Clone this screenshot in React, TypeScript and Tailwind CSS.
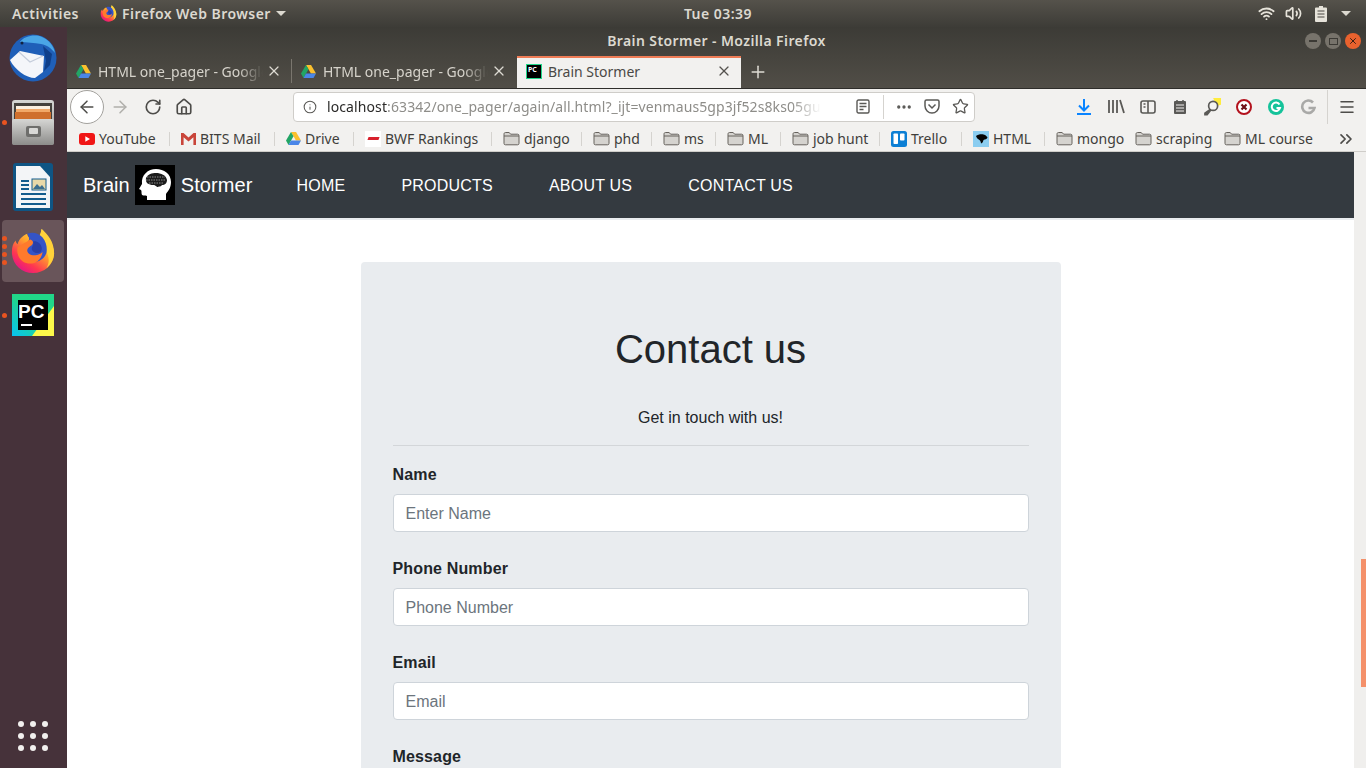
import { ArrowLeft, ArrowRight, ChevronsRight, Ellipsis, House, Info, Menu, Plus, RotateCw, Star, Volume2, Wifi, X } from 'lucide-react';

const uiFont = 'font-["Noto_Sans",sans-serif]';

function FirefoxLogo({ size, id }: { size: number; id: string }) {
  return (
    <svg width={size} height={size} viewBox="0 0 48 48">
      <defs>
        <linearGradient id={`${id}a`} x1="0.8" y1="0.1" x2="0.2" y2="0.95">
          <stop offset="0" stopColor="#ffe847" />
          <stop offset="0.4" stopColor="#ffa22c" />
          <stop offset="0.75" stopColor="#ff3750" />
          <stop offset="1" stopColor="#e31587" />
        </linearGradient>
      </defs>
      <path d="M33 1c5 4 2 7 4 10 6 5 9 10 9 15 0 12-10 21-22 21S2 38 2 25c0-5 1-9 4-12 0 2 1 3 2 4 1-5 5-9 10-11 0 3 3 5 5 6 4 1 9-3 10-11z" fill={`url(#${id}a)`} />
      <path d="M33 1c6 5 13 13 13 25 0 6-3 12-8 16 3-5 3-10 1-15-2-7-8-10-7-17 0-3 0-6 1-9z" fill="#ffd23a" />
      <path d="M18 6c5-2 12-1 16 4 4 5 5 11 4 16-2 6-8 10-14 9-6-1-10-6-10-11 0-4 1-7 4-9 3-2 2-6 0-9z" fill="#3554c7" />
      <path d="M8 20c4-3 9-5 13-8 4 1 4 5 0 7-3 2-4 5-2 7 3 4 11 3 15-1-1 8-7 13-15 12-8-1-13-9-11-17z" fill="#ff7a2c" />
      <path d="M24 14c4-1 8 2 9 6 1 4-2 7-6 6-3-1-5-3-4-6 1-2 2-4 1-6z" fill="#2a3fa8" />
    </svg>
  );
}

function DriveIcon({ size = 15 }: { size?: number }) {
  return (
    <svg width={size} height={size} viewBox="0 0 16 15" className="shrink-0">
      <path d="M5.3 0.5h5.4L16 9.6h-5.4z" fill="#fbc02d" />
      <path d="M5.3 0.5L0 9.6l2.7 4.8L8 5.2z" fill="#22a565" />
      <path d="M5.3 9.6H16l-2.7 4.8H2.7z" fill="#4a86e8" />
    </svg>
  );
}

function FolderIcon() {
  return (
    <svg width={17} height={15} viewBox="0 0 17 15" className="shrink-0">
      <path d="M1 3.2C1 2 1.6 1.5 2.6 1.5h3.6l1.4 1.7h7c.9 0 1.4.5 1.4 1.4v7.8c0 .9-.5 1.4-1.4 1.4H2.4c-.9 0-1.4-.5-1.4-1.4z" fill="#d5d3cf" stroke="#66625d" strokeWidth="1" />
      <path d="M1 5h15" stroke="#66625d" strokeWidth="1" />
    </svg>
  );
}

function YoutubeIcon() {
  return (
    <svg width={16} height={12} viewBox="0 0 16 12" className="shrink-0">
      <rect width="16" height="12" rx="3" fill="#f01616" />
      <path d="M6.3 3.2L11 6 6.3 8.8z" fill="#fff" />
    </svg>
  );
}

function GmailIcon() {
  return (
    <svg width={15} height={12} viewBox="0 0 15 12" className="shrink-0">
      <path d="M0 0h2.5L7.5 4.5 12.5 0H15v12h-2.6V4.3L7.5 8.6 2.6 4.3V12H0z" fill="#c9453a" />
    </svg>
  );
}

function BwfIcon() {
  return (
    <span className="flex h-4 w-4 shrink-0 items-center justify-center bg-white">
      <span className="h-[3px] w-[11px] skew-x-[-20deg] bg-[#d8202c]" />
    </span>
  );
}

function TrelloIcon() {
  return (
    <svg width={16} height={16} viewBox="0 0 16 16" className="shrink-0">
      <rect width="16" height="16" rx="2.5" fill="#0c7fd4" />
      <rect x="2.5" y="2.5" width="4.5" height="10.5" rx="0.8" fill="#fff" />
      <rect x="9" y="2.5" width="4.5" height="7" rx="0.8" fill="#fff" />
    </svg>
  );
}

function HtmlIcon() {
  return (
    <svg width={16} height={16} viewBox="0 0 16 16" className="shrink-0">
      <rect width="16" height="16" fill="#8bcdf0" />
      <path d="M3 5c2-2 7-2.500 9-1 1 .8 2 1.500 2.500 2.500C14 8 12 8.500 10.500 9c-.3 1.500-1 3-2.500 3.500 0-1-.5-2.500-1.500-3.500C5 8 3.500 7 3 5z" fill="#050505" />
    </svg>
  );
}

const bookmarks = [
  { label: 'YouTube', icon: <YoutubeIcon />, width: 'w-[102px]', sep: true },
  { label: 'BITS Mail', icon: <GmailIcon />, width: 'w-[105px]', sep: true },
  { label: 'Drive', icon: <DriveIcon />, width: 'w-[79px]', sep: true },
  { label: 'BWF Rankings', icon: <BwfIcon />, width: 'w-[138px]', sep: true },
  { label: 'django', icon: <FolderIcon />, width: 'w-[90px]', sep: true },
  { label: 'phd', icon: <FolderIcon />, width: 'w-[70px]', sep: true },
  { label: 'ms', icon: <FolderIcon />, width: 'w-[64px]', sep: true },
  { label: 'ML', icon: <FolderIcon />, width: 'w-[65px]', sep: true },
  { label: 'job hunt', icon: <FolderIcon />, width: 'w-[99px]', sep: true },
  { label: 'Trello', icon: <TrelloIcon />, width: 'w-[82px]', sep: true },
  { label: 'HTML', icon: <HtmlIcon />, width: 'w-[83px]', sep: true },
  { label: 'mongo', icon: <FolderIcon />, width: 'w-[79px]', sep: false },
  { label: 'scraping', icon: <FolderIcon />, width: 'w-[89px]', sep: false },
  { label: 'ML course', icon: <FolderIcon />, width: 'w-[122px]', sep: false },
];

function TopBar() {
  return (
    <div className={`flex h-[27px] shrink-0 items-center bg-gradient-to-b from-[#55524b] to-[#3d3c37] text-[14px] font-semibold tracking-[0.45px] text-[#dcd9d0] ${uiFont}`}>
      <span className="ml-3 w-[88px]">Activities</span>
      <FirefoxLogo size={17} id="top" />
      <span className="ml-[5px]">Firefox Web Browser</span>
      <span className="ml-[5px] h-0 w-0 border-x-[5px] border-t-[5px] border-x-transparent border-t-[#dcd9d0]" />
      <span className="ml-[398px] w-[66px] text-center whitespace-nowrap">Tue 03:39</span>
      <div className="ml-auto flex items-center">
        <Wifi size={17} strokeWidth={2.6} className="text-[#e6e3da]" />
        <Volume2 size={17} strokeWidth={2.4} className="ml-[10px] text-[#e6e3da]" />
        <svg width={12} height={16} viewBox="0 0 12 16" className="ml-[13px]">
          <path d="M4 0h4v1.500h3a1 1 0 0 1 1 1V15a1 1 0 0 1-1 1H1a1 1 0 0 1-1-1V2.500a1 1 0 0 1 1-1h3z" fill="#e6e3da" />
          <path d="M2.500 5h7M2.500 8h7M2.500 11h7" stroke="#4a4842" strokeWidth="1.200" />
        </svg>
        <span className="mr-[15px] ml-[14px] h-0 w-0 border-x-[5px] border-t-[5px] border-x-transparent border-t-[#dcd9d0]" />
      </div>
    </div>
  );
}

function Dock() {
  return (
    <div className="flex w-[67px] shrink-0 flex-col items-start bg-[#46323a] pl-[2px]">
      <div className="relative mt-[7px] flex h-[48px] w-[62px] items-center justify-center">
        <svg width={48} height={48} viewBox="0 0 48 48">
          <circle cx="24" cy="24" r="23.500" fill="#1f5fb8" />
          <path d="M11 8c4-6 15-8 22-5 7 3 12 9 13 16-4-5-8-8-14-9-7-1-14-2-21-2z" fill="#4aa6e6" />
          <path d="M34 12l3 15-2 10 6-6 2-11z" fill="#0f3f8a" />
          <path d="M1 26l10-9 24 5-1 16-8 6c-9 0-20-8-25-18z" fill="#f4f6fa" />
          <path d="M10 18l11 10 13-6" fill="none" stroke="#c5cddb" strokeWidth="1.200" />
          <circle cx="13" cy="9" r="1.500" fill="#12223f" />
        </svg>
      </div>
      <div className="relative mt-[18px] flex h-[45px] w-[62px] items-center justify-center">
        <span className="absolute left-0 top-[20px] h-[5px] w-[5px] rounded-full bg-[#e95420]" />
        <svg width={42} height={45} viewBox="0 0 42 45">
          <defs>
            <linearGradient id="cab" x1="0" y1="0" x2="0" y2="1">
              <stop offset="0" stopColor="#d6d6d4" />
              <stop offset="1" stopColor="#8c8c8a" />
            </linearGradient>
          </defs>
          <rect width="42" height="45" rx="3" fill="url(#cab)" />
          <rect x="2" y="3" width="38" height="16" fill="#45413d" />
          <rect x="4" y="6" width="34" height="3" fill="#fbefe0" />
          <rect x="4" y="9" width="34" height="3" fill="#f1a869" />
          <rect x="3" y="12" width="36" height="7" fill="#cf6f2e" />
          <rect x="0" y="19" width="42" height="26" rx="2" fill="url(#cab)" />
          <rect x="14" y="26" width="15" height="11" rx="2" fill="#6e6e6c" />
          <rect x="17" y="28" width="9" height="6" rx="1" fill="#d8d8d6" />
        </svg>
      </div>
      <div className="mt-[18px] flex h-[48px] w-[62px] items-center justify-center">
        <svg width={40} height={48} viewBox="0 0 40 48">
          <rect width="40" height="48" rx="3" fill="#0f5584" />
          <path d="M3 3h24l10 11v31H3z" fill="#f3f5f7" />
          <path d="M28 2h10v10z" fill="#0f5584" />
          <path d="M8 18h8M8 22h8M8 26h8M8 31h25M8 36h25M8 41h25" stroke="#135c8d" strokeWidth="2" />
          <rect x="19" y="16" width="14" height="11" fill="#e9d9a8" stroke="#135c8d" />
          <path d="M20 26l4-5 3 3 2-2 3 4z" fill="#3c6f8f" />
        </svg>
      </div>
      <div className="relative mt-[9px] flex h-[62px] w-[62px] items-center justify-center rounded-[4px] bg-[#69555a]">
        <div className="absolute left-0 top-[16px] flex flex-col gap-[3px]">
          <span className="h-[5px] w-[5px] rounded-full bg-[#e95420]" />
          <span className="h-[5px] w-[5px] rounded-full bg-[#e95420]" />
          <span className="h-[5px] w-[5px] rounded-full bg-[#e95420]" />
          <span className="h-[5px] w-[5px] rounded-full bg-[#e95420]" />
        </div>
        <FirefoxLogo size={46} id="dock" />
      </div>
      <div className="relative mt-[12px] flex h-[42px] w-[62px] items-center justify-center">
        <span className="absolute left-0 top-[19px] h-[5px] w-[5px] rounded-full bg-[#e95420]" />
        <svg width={42} height={42} viewBox="0 0 42 42">
          <defs>
            <linearGradient id="pc" x1="0" y1="1" x2="1" y2="0">
              <stop offset="0" stopColor="#07c3f2" />
              <stop offset="0.5" stopColor="#21d789" />
              <stop offset="1" stopColor="#21d789" />
            </linearGradient>
          </defs>
          <rect width="42" height="42" fill="url(#pc)" />
          <path d="M42 12v30H20z" fill="#fcf84a" />
          <rect x="6" y="6" width="30" height="30" fill="#000" />
        </svg>
        <span className="absolute left-[16px] top-[7px] font-['Liberation_Sans',sans-serif] text-[19px] leading-[22px] font-bold text-white">PC</span>
        <span className="absolute left-[19px] top-[30px] h-[2px] w-[11px] bg-white" />
      </div>
      <div className="mt-auto mb-[17px] ml-[16px] grid grid-cols-3 gap-x-[6px] gap-y-[6px]">
        {Array.from({ length: 9 }).map((_, i) => (
          <span key={i} className="h-[6px] w-[6px] rounded-full bg-[#f2f0ee]" />
        ))}
      </div>
    </div>
  );
}

function InactiveTab({ withSeparator }: { withSeparator: boolean }) {
  return (
    <div className="flex h-[32px] w-[225px] items-center pb-[2px] pl-[9px]">
      <DriveIcon />
      <span className="ml-[7px] w-[165px] overflow-hidden whitespace-nowrap text-[14px] text-[#d6d3cb] [mask-image:linear-gradient(to_right,black_85%,transparent)]">HTML one_pager - Google</span>
      <X size={16} strokeWidth={1.8} className="ml-[3px] text-[#dedbd3]" />
      {withSeparator && <span className="ml-[9px] h-[24px] w-px bg-[#7a766e]" />}
    </div>
  );
}

function TitleAndTabs() {
  return (
    <div className={`h-[61px] shrink-0 bg-gradient-to-b from-[#3c3b36] to-[#514e47] ${uiFont}`}>
      <div className="relative flex h-[29px] items-center justify-center text-[14px] font-semibold tracking-[0.4px] text-[#dcd9d0]">
        <span className="pb-[2px]">Brain Stormer - Mozilla Firefox</span>
        <div className="absolute right-[5px] top-[6px] flex gap-[4px]">
          <span className="flex h-4 w-4 items-center justify-center rounded-full bg-[#77736b]"><span className="h-[1.5px] w-2 bg-[#3c3a35]" /></span>
          <span className="flex h-4 w-4 items-center justify-center rounded-full bg-[#77736b]"><span className="h-[7px] w-[9px] border border-[#3c3a35]" /></span>
          <span className="flex h-4 w-4 items-center justify-center rounded-full bg-[#e9622e]"><X size={10} strokeWidth={2.4} className="text-[#3c2014]" /></span>
        </div>
      </div>
      <div className="flex items-end pl-0">
        <InactiveTab withSeparator />
        <InactiveTab withSeparator={false} />
        <div className="flex h-[32px] w-[224px] items-center border-t-2 border-[#ef7c56] bg-[#f2f1ef] pb-[4px] pl-[9px]">
          <span className="flex h-[15px] w-[16px] items-start border border-[#21d789] bg-black pl-[1px] text-[7px] leading-[9px] font-bold text-white">PC</span>
          <span className="ml-[6px] w-[168px] text-[14px] whitespace-nowrap text-[#4a4946]">Brain Stormer</span>
          <X size={16} strokeWidth={1.8} className="text-[#55534f]" />
        </div>
        <Plus size={20} strokeWidth={1.8} className="mb-[6px] ml-[7px] text-[#dedbd3]" />
      </div>
    </div>
  );
}

function NavToolbar() {
  return (
    <div className={`flex h-[36px] shrink-0 items-center border-t border-[#2e2d2a] bg-[#f2f1ef] ${uiFont}`}>
      <span className="ml-[3px] flex h-[34px] w-[34px] items-center justify-center rounded-full border border-[#a3a19d] bg-white">
        <ArrowLeft size={20} strokeWidth={1.8} className="text-[#4d4c49]" />
      </span>
      <ArrowRight size={20} strokeWidth={1.8} className="ml-[6px] text-[#b0afab]" />
      <RotateCw size={18} strokeWidth={2.2} className="ml-[14px] text-[#4d4c49]" />
      <House size={18} strokeWidth={2.2} className="ml-[13px] text-[#4d4c49]" />
      <div className="ml-[100px] flex h-[30px] w-[682px] items-center rounded-[4px] border border-[#cfcdc9] bg-white">
        <Info size={14} strokeWidth={1.8} className="ml-[9px] text-[#5a5956]" />
        <span className="ml-[10px] w-[494px] overflow-hidden text-[14px] tracking-[0.1px] whitespace-nowrap text-[#8e8d89] [mask-image:linear-gradient(to_right,black_94%,transparent)]">
          <span className="text-[#2b2a29]">localhost</span>:63342/one_pager/again/all.html?_ijt=venmaus5gp3jf52s8ks05gu
        </span>
        <svg width={14} height={15} viewBox="0 0 14 15" fill="none" stroke="#5a5956" strokeWidth="1.400" className="ml-[35px]">
          <rect x="1" y="1" width="12" height="13" rx="1.500" />
          <path d="M3.500 4.500h7M3.500 7.500h7M3.500 10.500h4" />
        </svg>
        <span className="ml-[13px] h-[24px] w-px bg-[#d5d3cf]" />
        <Ellipsis size={18} strokeWidth={2.4} className="ml-[11px] text-[#5a5956]" />
        <svg width={16} height={15} viewBox="0 0 16 15" fill="none" stroke="#5a5956" strokeWidth="1.500" className="ml-[11px]">
          <path d="M1 2.500C1 1.500 1.700 1 2.500 1h11c.8 0 1.500.5 1.500 1.500V7c0 3.800-3.300 7-7 7S1 10.800 1 7z" />
          <path d="M4.500 5.500L8 9l3.500-3.500" />
        </svg>
        <Star size={17} strokeWidth={1.8} className="ml-[12px] text-[#5a5956]" />
      </div>
      <div className="ml-[102px] flex h-[36px] items-center">
        <svg width={14} height={16} viewBox="0 0 14 16" fill="none" stroke="#0a84ff" strokeWidth="2">
          <path d="M7 0v11M2 6.500L7 11.500l5-5M0 15h14" />
        </svg>
        <svg width={17} height={15} viewBox="0 0 17 15" fill="none" stroke="#5a5956" strokeWidth="1.800" className="ml-[17px]">
          <path d="M1 1v13M5 1v13M9 1v13M12 1l4 13" />
        </svg>
        <svg width={16} height={14} viewBox="0 0 16 14" fill="none" stroke="#5a5956" strokeWidth="1.600" className="ml-[15px]">
          <rect x="1" y="1" width="14" height="12" rx="2" />
          <path d="M8 1v12M3.500 4h2M3.500 7h2" />
        </svg>
        <svg width={12} height={14} viewBox="0 0 12 14" className="ml-[18px]">
          <rect y="1" width="12" height="13" rx="1" fill="#5a5956" />
          <path d="M2 5h8M2 8h8M2 11h8" stroke="#f2f1ef" strokeWidth="1" />
          <path d="M3 0v2M9 0v2" stroke="#5a5956" strokeWidth="1.500" />
        </svg>
        <svg width={18} height={18} viewBox="0 0 16 16" className="ml-[17px]">
          <path d="M9 0h7v6l-4 1z" fill="#ffec3d" />
          <circle cx="9" cy="7" r="4" fill="#f4f4f2" stroke="#5a5956" strokeWidth="1.500" />
          <path d="M6 9.500L1 13v2.500h3l3.500-4.500z" fill="#5a5956" />
        </svg>
        <svg width={16} height={16} viewBox="0 0 16 16" className="ml-[15px]">
          <circle cx="8" cy="8" r="7" fill="#fff" stroke="#b3121d" strokeWidth="2" />
          <path d="M5.500 5.500l5 5M10.500 5.500l-5 5" stroke="#6e0f16" strokeWidth="2.200" />
        </svg>
        <svg width={16} height={16} viewBox="0 0 16 16" className="ml-[16px]">
          <circle cx="8" cy="8" r="8" fill="#15c39a" />
          <path d="M11.500 5.500A4.200 4.200 0 1 0 12 9H8.500" fill="none" stroke="#fff" strokeWidth="2" />
        </svg>
        <svg width={16} height={16} viewBox="0 0 16 16" className="ml-[16px]">
          <path d="M13 3.500A6.200 6.200 0 1 0 14.500 9H8.500" fill="none" stroke="#a9a9a7" strokeWidth="2.600" />
        </svg>
        <span className="ml-[11px] h-[34px] w-px bg-[#d5d3cf]" />
        <Menu size={18} strokeWidth={2} className="ml-[10px] text-[#4d4c49]" />
      </div>
    </div>
  );
}

function BookmarksBar() {
  return (
    <div className={`flex h-[28px] shrink-0 items-center border-b border-[#cfcdc9] bg-[#f2f1ef] pt-[2px] pl-3 text-[14px] text-[#3f3e3b] ${uiFont}`}>
      {bookmarks.map((b) => (
        <div key={b.label} className={`flex items-center ${b.width}`}>
          {b.icon}
          <span className="ml-[4px] whitespace-nowrap">{b.label}</span>
          {b.sep && <span className="mr-[11px] ml-auto h-[14px] w-px bg-[#d5d3cf]" />}
        </div>
      ))}
      <ChevronsRight size={20} strokeWidth={2} className="-ml-[10px] text-[#4d4c49]" />
    </div>
  );
}

function BrainLogo() {
  return (
    <svg width={40} height={40} viewBox="0 0 40 40">
      <rect width="40" height="40" fill="#000" />
      <path d="M12 35v-4c-2-1-3 0-5-1-1-2 0-4-1-5l-2-1 3-5c-1-9 6-15 14-15 8 0 15 5 15 13 0 6-3 9-5 12v6z" fill="#fff" />
      <path d="M11 13c2-4 6-5 10-5 5 0 10 2 11 7 0 3-2 5-5 5-1 2-3 1-4 2-2 0-2-2-5-2-4 0-8-2-7-7z" fill="#1c1c1c" />
      <path d="M12 12h18M11 15h20M14 18h14" stroke="#8a8a8a" strokeWidth="1" strokeDasharray="1.500 1" />
    </svg>
  );
}

function Field({ label, placeholder }: { label: string; placeholder: string }) {
  return (
    <div className="mb-6">
      <label className="mb-[7px] block pt-px text-[16px] leading-6 font-bold tracking-[0.15px] text-[#212529]">{label}</label>
      <input placeholder={placeholder} className="block h-[38px] w-full rounded-[4px] border border-[#ced4da] bg-white px-3 pt-[2px] text-[16px] placeholder:text-[#6c757d]" />
    </div>
  );
}

function Page() {
  return (
    <div className="flex min-h-0 flex-1 font-['Liberation_Sans',sans-serif]">
      <div className="min-w-0 flex-1 overflow-hidden bg-white">
        <nav className="flex h-[68px] items-center border-b-2 border-[#e9ecef] bg-[#343a40] pl-4 text-white">
          <span className="text-[20px]">Brain</span>
          <span className="mr-[6px] ml-[5px]"><BrainLogo /></span>
          <span className="text-[20px] tracking-[0.1px]">Stormer</span>
          <div className="ml-[44px] flex gap-[56px] pt-[2px] text-[16px] tracking-[0.22px]">
            <a>HOME</a>
            <a>PRODUCTS</a>
            <a>ABOUT US</a>
            <a>CONTACT US</a>
          </div>
        </nav>
        <section className="mx-auto mt-[42px] w-[700px] rounded-[4px] bg-[#e9ecef] px-8 pt-[63px]">
          <h1 className="text-center text-[40px] leading-[48px] text-[#212529]">Contact us</h1>
          <p className="mt-[33px] text-center text-[16px] leading-6 text-[#212529]">Get in touch with us!</p>
          <hr className="mt-[15px] mb-4 border-[#d3d6d9]" />
          <Field label="Name" placeholder="Enter Name" />
          <Field label="Phone Number" placeholder="Phone Number" />
          <Field label="Email" placeholder="Email" />
          <Field label="Message" placeholder="Message" />
        </section>
      </div>
      <div className="flex w-3 shrink-0 justify-end bg-[#f0efed] pt-[407px]">
        <div className="h-[128px] w-[5px] bg-[#f4906a]" />
      </div>
    </div>
  );
}

export default function App() {
  return (
    <div className="flex h-screen w-[1366px] flex-col overflow-hidden">
      <TopBar />
      <div className="flex min-h-0 flex-1">
        <Dock />
        <div className="flex min-w-0 flex-1 flex-col">
          <TitleAndTabs />
          <NavToolbar />
          <BookmarksBar />
          <Page />
        </div>
      </div>
    </div>
  );
}
